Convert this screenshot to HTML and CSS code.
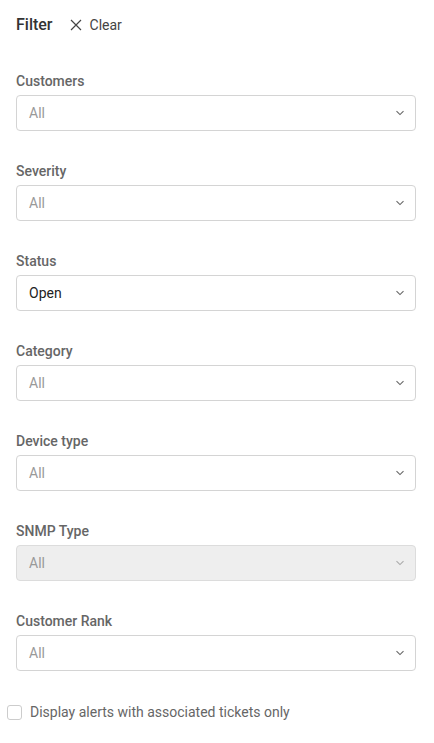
FILE: index.html
```html
<!DOCTYPE html>
<html>
<head>
<meta charset="utf-8">
<link rel="stylesheet" href="styles.css">
</head>
<body>
<div class="panel">
  <div class="header">
    <span class="title">Filter</span>
    <button class="clear">
      <svg width="12" height="12" viewBox="0 0 12 12"><path d="M1 1L11 11M11 1L1 11" stroke="#444" stroke-width="1.2" fill="none"/></svg>
      Clear
    </button>
  </div>
  <div class="fields">
    <div class="field">
      <div class="label">Customers</div>
      <div class="select placeholder"><span>All</span><svg class="chev" width="10" height="6" viewBox="0 0 10 6"><path d="M1.5 1.2L5 4.6L8.5 1.2" stroke="#666" stroke-width="1.1" fill="none"/></svg></div>
    </div>
    <div class="field">
      <div class="label">Severity</div>
      <div class="select placeholder"><span>All</span><svg class="chev" width="10" height="6" viewBox="0 0 10 6"><path d="M1.5 1.2L5 4.6L8.5 1.2" stroke="#666" stroke-width="1.1" fill="none"/></svg></div>
    </div>
    <div class="field">
      <div class="label">Status</div>
      <div class="select"><span>Open</span><svg class="chev" width="10" height="6" viewBox="0 0 10 6"><path d="M1.5 1.2L5 4.6L8.5 1.2" stroke="#666" stroke-width="1.1" fill="none"/></svg></div>
    </div>
    <div class="field">
      <div class="label">Category</div>
      <div class="select placeholder"><span>All</span><svg class="chev" width="10" height="6" viewBox="0 0 10 6"><path d="M1.5 1.2L5 4.6L8.5 1.2" stroke="#666" stroke-width="1.1" fill="none"/></svg></div>
    </div>
    <div class="field">
      <div class="label">Device type</div>
      <div class="select placeholder"><span>All</span><svg class="chev" width="10" height="6" viewBox="0 0 10 6"><path d="M1.5 1.2L5 4.6L8.5 1.2" stroke="#666" stroke-width="1.1" fill="none"/></svg></div>
    </div>
    <div class="field">
      <div class="label">SNMP Type</div>
      <div class="select placeholder disabled"><span>All</span><svg class="chev" width="10" height="6" viewBox="0 0 10 6"><path d="M1.5 1.2L5 4.6L8.5 1.2" stroke="#aaa" stroke-width="1.1" fill="none"/></svg></div>
    </div>
    <div class="field">
      <div class="label">Customer Rank</div>
      <div class="select placeholder"><span>All</span><svg class="chev" width="10" height="6" viewBox="0 0 10 6"><path d="M1.5 1.2L5 4.6L8.5 1.2" stroke="#666" stroke-width="1.1" fill="none"/></svg></div>
    </div>
  </div>
  <label class="check">
    <span class="box"></span>
    <span class="check-text">Display alerts with associated tickets only</span>
  </label>
</div>
</body>
</html>
```
FILE: styles.css
```css
* { box-sizing: border-box; }
html, body { margin: 0; padding: 0; background: #fff; }
body {
  font-family: Roboto, "Noto Sans", "Liberation Sans", sans-serif;
  color: #333;
}
.panel {
  width: 434px;
  padding: 0 18px 0 16px;
}
.header {
  display: flex;
  align-items: center;
  height: 49px;
  gap: 17px;
}
.title {
  font-size: 16px;
  font-weight: 500;
  color: #333;
}
.clear {
  display: flex;
  align-items: center;
  gap: 8px;
  border: 0;
  background: none;
  padding: 0;
  font-family: inherit;
  font-size: 14px;
  color: #444;
}
.fields {
  display: flex;
  flex-direction: column;
  gap: 32px;
  padding-top: 24px;
}
.field {
  display: flex;
  flex-direction: column;
  gap: 6px;
}
.label {
  font-size: 14px;
  line-height: 16px;
  font-weight: 500;
  color: #666;
}
.select {
  display: flex;
  align-items: center;
  justify-content: space-between;
  height: 36px;
  border: 1px solid #d4d4d4;
  border-radius: 4px;
  padding: 0 10px 0 12px;
  font-size: 14px;
  color: #222;
  background: #fff;
}
.select.placeholder { color: #999; }
.select.disabled { background: #eeeeee; border-color: #dcdcdc; }
.chev { display: block; }
.check {
  display: flex;
  align-items: center;
  gap: 8px;
  margin: 33px 0 0 -9px;
  font-size: 14px;
  color: #666;
}
.box {
  width: 15px;
  height: 15px;
  border: 1px solid #ccc;
  border-radius: 3px;
  background: #fff;
}
```
